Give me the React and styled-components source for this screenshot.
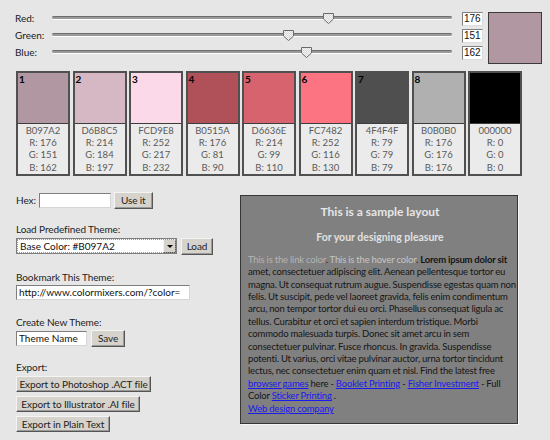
import React from "react";
import styled, { createGlobalStyle } from "styled-components";

const Global = createGlobalStyle`
  html, body { margin: 0; padding: 0; background: #e6e6e6; }
  body { font-family: Lato, "Open Sans", sans-serif; font-size: 10px; color: #222; }
  * { box-sizing: border-box; }
`;

const Page = styled.div`
  width: 550px;
  height: 440px;
  overflow: hidden;
  background: #e6e6e6;
`;

const TopSection = styled.div`
  display: flex;
  align-items: flex-start;
  padding: 9px 0 0 15px;
`;

const SliderGrid = styled.div`
  display: grid;
  grid-template-columns: 27px 400px 21px;
  grid-auto-rows: 17px;
  column-gap: 10px;
  align-items: center;
`;

const SliderLabel = styled.span`
  white-space: nowrap;
  font-size: 10px;
  color: #1a1a1a;
`;

const TrackArea = styled.div`
  position: relative;
  height: 17px;
  display: flex;
  align-items: center;
`;

const TrackLine = styled.div`
  width: 100%;
  height: 3px;
  border-radius: 2px;
  background: #9a9a9a;
  border-top: 1px solid #6e6e6e;
  box-shadow: 0 1px 0 #ffffff;
`;

const ThumbSvg = styled.svg`
  position: absolute;
  top: 4px;
  width: 11px;
  height: 11px;
`;

const NumInput = styled.div`
  width: 21px;
  height: 14px;
  margin-top: 3px;
  align-self: start;
  background: #fff;
  border: 1px solid;
  border-color: #808080 #dcdcdc #dcdcdc #808080;
  font-family: "Liberation Sans", Arial, sans-serif;
  font-size: 10px;
  line-height: 12px;
  padding-left: 1px;
  color: #111;
`;

const Preview = styled.div`
  width: 54px;
  height: 52px;
  margin: 3px 0 0 5px;
  border: 1px solid #3a3a3a;
  background: ${(p) => p.$color};
`;

const SwatchRow = styled.div`
  display: flex;
  gap: 2.5px;
  padding-left: 16px;
  margin-top: 7px;
`;

const Swatch = styled.div`
  width: 54px;
  border: 2px solid #505050;
  background: #ebebeb;
  display: flex;
  flex-direction: column;
`;

const ColorBlock = styled.div`
  height: 51px;
  background: ${(p) => p.$color};
  border-bottom: 1px solid #3c3c3c;
  color: #000;
  font-size: 10px;
  font-weight: 700;
  line-height: 10px;
  padding: 1px 0 0 1px;
`;

const SwatchInfo = styled.div`
  text-align: center;
  color: #5a5a5a;
  font-size: 9.5px;
  line-height: 12.2px;
  padding: 1px 0 0;
`;

const BottomSection = styled.div`
  display: flex;
  align-items: flex-start;
  padding-left: 16px;
  margin-top: 16px;
`;

const LeftColumn = styled.div`
  width: 224px;
  display: flex;
  flex-direction: column;
`;

const Field = styled.div`
  display: flex;
  flex-direction: column;
  align-items: flex-start;
  gap: ${(p) => p.$gap ?? 3}px;
  margin-top: ${(p) => p.$mt ?? 0}px;
`;

const Label = styled.div`
  font-size: 10px;
  line-height: 12px;
  color: #222;
  letter-spacing: -0.1px;
`;

const InlineRow = styled.div`
  display: flex;
  align-items: center;
  gap: ${(p) => p.$gap ?? 4}px;
`;

const TextInput = styled.div`
  width: ${(p) => p.$w}px;
  height: 15px;
  background: #fff;
  border: 1px solid;
  border-color: #7e7e7e #d6d6d6 #d6d6d6 #7e7e7e;
  font-size: 10px;
  line-height: 13px;
  padding-left: 2px;
  color: #111;
  white-space: nowrap;
  overflow: hidden;
`;

const Button = styled.div`
  width: ${(p) => p.$w}px;
  height: ${(p) => p.$h ?? 17}px;
  background: #d6d3cc;
  border: 1px solid;
  border-color: #f4f4f4 #555 #555 #f4f4f4;
  box-shadow: inset -1px -1px 0 #9a9a9a;
  font-size: 10px;
  color: #1e1e1e;
  display: flex;
  align-items: center;
  justify-content: center;
  white-space: nowrap;
  letter-spacing: -0.1px;
`;

const SelectBox = styled.div`
  width: 161px;
  height: 16px;
  background: #fff;
  border: 1px solid #7e7e7e;
  outline: 1px dotted #9a9a9a;
  outline-offset: -2px;
  display: flex;
  align-items: stretch;
`;

const SelectText = styled.div`
  flex: 1;
  font-size: 10px;
  line-height: 14px;
  padding-left: 3px;
  color: #111;
`;

const SelectArrow = styled.div`
  width: 13px;
  background: #d6d3cc;
  border: 1px solid;
  border-color: #f4f4f4 #555 #555 #f4f4f4;
  display: flex;
  align-items: center;
  justify-content: center;
  &::after {
    content: "";
    border-left: 3px solid transparent;
    border-right: 3px solid transparent;
    border-top: 3px solid #000;
  }
`;

const ExportList = styled.div`
  display: flex;
  flex-direction: column;
  gap: 4px;
`;

const Panel = styled.div`
  width: 278px;
  height: 229px;
  margin-top: 3px;
  background: #808080;
  border: 1px solid #363636;
  box-shadow: 1px 1px 0 #f6f6f6;
  padding: 8px 5px 0 7px;
`;

const PanelTitle = styled.div`
  text-align: center;
  font-weight: 700;
  font-size: 12px;
  line-height: 16px;
  color: #e6e6e6;
`;

const PanelSubtitle = styled.div`
  text-align: center;
  font-weight: 700;
  font-size: 10.5px;
  line-height: 14px;
  margin-top: 10px;
  color: #e0e0e0;
`;

const PanelBody = styled.p`
  margin: 10px 0 0;
  font-size: 9.5px;
  letter-spacing: -0.17px;
  word-spacing: -0.2px;
  line-height: 12.4px;
  white-space: nowrap;
  color: #151515;
`;

const SoftLink = styled.span`
  color: ${(p) => p.$color};
`;

const Strong = styled.span`
  font-weight: 700;
`;

const BlueLink = styled.a`
  color: #1a1aee;
  text-decoration: underline;
`;

function Thumb({ value }) {
  const left = (value / 255) * 400 - 5.5;
  return (
    <ThumbSvg viewBox="0 0 11 11" style={{ left }}>
      <defs>
        <pattern id={`dither${value}`} width="2" height="2" patternUnits="userSpaceOnUse">
          <rect width="2" height="2" fill="#d8d8d8" />
          <rect width="1" height="1" fill="#f4f4f4" />
          <rect x="1" y="1" width="1" height="1" fill="#f4f4f4" />
        </pattern>
      </defs>
      <polygon
        points="0.5,0.5 10.5,0.5 10.5,6 5.5,10.5 0.5,6"
        fill={`url(#dither${value})`}
        stroke="#6a6a6a"
        strokeWidth="1"
      />
    </ThumbSvg>
  );
}

const channels = [
  { label: "Red:", value: 176 },
  { label: "Green:", value: 151 },
  { label: "Blue:", value: 162 },
];

const swatches = [
  { hex: "B097A2", r: 176, g: 151, b: 162 },
  { hex: "D6B8C5", r: 214, g: 184, b: 197 },
  { hex: "FCD9E8", r: 252, g: 217, b: 232 },
  { hex: "B0515A", r: 176, g: 81, b: 90 },
  { hex: "D6636E", r: 214, g: 99, b: 110 },
  { hex: "FC7482", r: 252, g: 116, b: 130 },
  { hex: "4F4F4F", r: 79, g: 79, b: 79 },
  { hex: "B0B0B0", r: 176, g: 176, b: 176 },
  { hex: "000000", r: 0, g: 0, b: 0 },
];

export default function App() {
  return (
    <Page>
      <Global />
      <TopSection>
        <SliderGrid>
          {channels.map((c) => (
            <React.Fragment key={c.label}>
              <SliderLabel>{c.label}</SliderLabel>
              <TrackArea>
                <TrackLine />
                <Thumb value={c.value} />
              </TrackArea>
              <NumInput>{c.value}</NumInput>
            </React.Fragment>
          ))}
        </SliderGrid>
        <Preview $color="#B097A2" />
      </TopSection>

      <SwatchRow>
        {swatches.map((s, i) => (
          <Swatch key={s.hex}>
            <ColorBlock $color={`#${s.hex}`}>{i + 1}</ColorBlock>
            <SwatchInfo>
              <div>{s.hex}</div>
              <div>R: {s.r}</div>
              <div>G: {s.g}</div>
              <div>B: {s.b}</div>
            </SwatchInfo>
          </Swatch>
        ))}
      </SwatchRow>

      <BottomSection>
        <LeftColumn>
          <InlineRow $gap={3}>
            <Label>Hex:</Label>
            <TextInput $w={72} />
            <Button $w={39}>Use it</Button>
          </InlineRow>

          <Field $mt={14}>
            <Label>Load Predefined Theme:</Label>
            <InlineRow $gap={4}>
              <SelectBox>
                <SelectText>Base Color: #B097A2</SelectText>
                <SelectArrow />
              </SelectBox>
              <Button $w={32}>Load</Button>
            </InlineRow>
          </Field>

          <Field $mt={16} $gap={2}>
            <Label>Bookmark This Theme:</Label>
            <TextInput $w={174}>http://www.colormixers.com/?color=</TextInput>
          </Field>

          <Field $mt={16} $gap={2}>
            <Label>Create New Theme:</Label>
            <InlineRow $gap={4}>
              <TextInput $w={71}>Theme Name</TextInput>
              <Button $w={34}>Save</Button>
            </InlineRow>
          </Field>

          <Field $mt={14} $gap={3}>
            <Label>Export:</Label>
            <ExportList>
              <Button $w={135} $h={16}>Export to Photoshop .ACT file</Button>
              <Button $w={124} $h={16}>Export to Illustrator .AI file</Button>
              <Button $w={94} $h={16}>Export in Plain Text</Button>
            </ExportList>
          </Field>
        </LeftColumn>

        <Panel>
          <PanelTitle>This is a sample layout</PanelTitle>
          <PanelSubtitle>For your designing pleasure</PanelSubtitle>
          <PanelBody>
            <SoftLink $color="#b4b4b4">This is the link color</SoftLink>.{" "}
            <SoftLink $color="#c6c6c6">This is the hover color</SoftLink>.{" "}
            <Strong>Lorem ipsum dolor sit</Strong>
            <br />
            amet, consectetuer adipiscing elit. Aenean pellentesque tortor eu
            <br />
            magna. Ut consequat rutrum augue. Suspendisse egestas quam non
            <br />
            felis. Ut suscipit, pede vel laoreet gravida, felis enim condimentum
            <br />
            arcu, non tempor tortor dui eu orci. Phasellus consequat ligula ac
            <br />
            tellus. Curabitur et orci et sapien interdum tristique. Morbi
            <br />
            commodo malesuada turpis. Donec sit amet arcu in sem
            <br />
            consectetuer pulvinar. Fusce rhoncus. In gravida. Suspendisse
            <br />
            potenti. Ut varius, orci vitae pulvinar auctor, urna tortor tincidunt
            <br />
            lectus, nec consectetuer enim quam et nisl. Find the latest free
            <br />
            <BlueLink href="#">browser games</BlueLink> here -{" "}
            <BlueLink href="#">Booklet Printing</BlueLink> -{" "}
            <BlueLink href="#">Fisher Investment</BlueLink> - Full
            <br />
            Color <BlueLink href="#">Sticker Printing</BlueLink> .
            <br />
            <BlueLink href="#">Web design company</BlueLink>
          </PanelBody>
        </Panel>
      </BottomSection>
    </Page>
  );
}
